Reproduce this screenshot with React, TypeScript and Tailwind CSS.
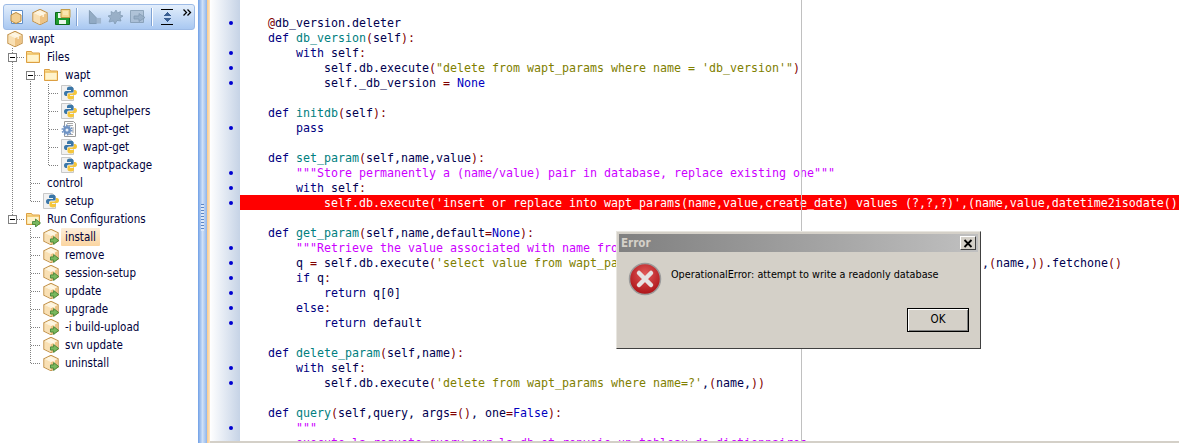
import React from "react";

const CODE: string[] = [
  "    @db_version.deleter",
  "    def db_version(self):",
  "        with self:",
  "            self.db.execute(\"delete from wapt_params where name = 'db_version'\")",
  "            self._db_version = None",
  "",
  "    def initdb(self):",
  "        pass",
  "",
  "    def set_param(self,name,value):",
  '        """Store permanently a (name/value) pair in database, replace existing one"""',
  "        with self:",
  "            self.db.execute('insert or replace into wapt_params(name,value,create_date) values (?,?,?)',(name,value,datetime2isodate()))",
  "",
  "    def get_param(self,name,default=None):",
  '        """Retrieve the value associated with name from database"""',
  "        q = self.db.execute('select value from wapt_params where name=? order by create_date desc limit 1',(name,)).fetchone()",
  "        if q:",
  "            return q[0]",
  "        else:",
  "            return default",
  "",
  "    def delete_param(self,name):",
  "        with self:",
  "            self.db.execute('delete from wapt_params where name=?',(name,))",
  "",
  "    def query(self,query, args=(), one=False):",
  '        """',
  '        execute la requete query sur la db et renvoie un tableau de dictionnaires',
];

const DOTS = [0, 2, 3, 4, 7, 10, 11, 12, 15, 16, 17, 18, 19, 20, 23, 24, 27, 28];

function tokens(line: string, index: number) {
  if (index === 28) return [<span key="d" className="text-[#cc00ff]">{line}</span>];
  if (index === 12) return [<span key="w">{line}</span>];
  const re = /("""[^"]*(?:""")?|"[^"]*"|'[^']*'|\b(?:def|with|if|else|return|pass)\b|\b(?:None|False)\b|[()=:@]|[^"'()=:@]+?(?=\b|["'()=:@]|$))/g;
  const out: React.ReactNode[] = [];
  let afterDef = false;
  let i = 0;
  for (const m of line.matchAll(re)) {
    const t = m[0];
    let c = "text-[#000050]";
    if (t.startsWith('"""')) c = "text-[#cc00ff]";
    else if (t[0] === '"' || t[0] === "'") c = "text-[#808000]";
    else if (/^(def|with|if|else|return|pass)$/.test(t)) c = "text-[#000080]";
    else if (/^(None|False)$/.test(t)) c = "text-[#0000c0]";
    else if (/^[()=:@]$/.test(t)) c = "text-[#800000]";
    else if (afterDef && /\w/.test(t)) {
      c = "text-[#008080]";
      afterDef = false;
    }
    if (t === "def") afterDef = true;
    out.push(<span key={i++} className={c}>{t}</span>);
  }
  return out;
}

function Package({ arrow = false }: { arrow?: boolean }) {
  return (
    <svg width="16" height="16" viewBox="0.6 0.4 14.8 15.2" className="shrink-0">
      <path d="M8 .7 14.8 4v8L8 15.3 1.200 12V4Z" fill="#f8e2b8" stroke="#c2924a" />
      <path d="M8 1.500 14 4.200 8 7.200 2 4.200Z" fill="#fdf3dc" />
      <path d="M8 7.200V14.800L2 11.800V4.600Z" fill="#f9e0b4" />
      <path d="M8 7.200V14.800l6-3V4.600Z" fill="#eec383" />
      <path d="M5 2.800 11 5.800V8" fill="none" stroke="#fff8e8" strokeWidth="1.200" />
      {arrow && (
        <path d="M7.500 9.800h3V7.500l4.800 3.800-4.800 3.800v-2.300h-3Z" fill="#79b85e" stroke="#3d7f32" strokeWidth=".8" />
      )}
    </svg>
  );
}

function Folder({ arrow = false }: { arrow?: boolean }) {
  return (
    <svg width="16" height="16" viewBox="0 0 16 16" className="shrink-0">
      <path d="M1.500 2.500h5l1 1.500h7v9.500h-13Z" fill="#fbdc8c" stroke="#dc9f42" />
      <path d="M2.500 6h11v6.500h-11Z" fill="#fff3cc" />
      <path d="M2 5h12" stroke="#eab95e" />
      {arrow && (
        <path d="M7.500 10.500h3V8l5 4-5 4v-2.500h-3Z" fill="#79b85e" stroke="#3d7f32" strokeWidth=".8" />
      )}
    </svg>
  );
}

function PyDoc() {
  return (
    <svg width="16" height="18" viewBox="0 0 16 18" className="shrink-0">
      <path d="M.5 1.500h9l3 3v12H.5Z" fill="#f1f1f1" stroke="#c8c8c8" />
      <path d="M9 2.500C7 2.500 6 3.300 6 4.500V6h4v1H5C3.800 7 3 8 3 9.500S3.800 12 5 12h1v-1.500C6 9.300 7 8.500 8 8.500h3c1 0 1.500-.7 1.500-1.500V4.500C12.500 3.300 11 2.500 9 2.500Z" fill="#3a76a8" />
      <path d="M10 15.500c2 0 3-.8 3-2V12H9v-1h5c1.200 0 2-1 2-2.500S15.200 6 14 6h-1v1.500c0 1.200-1 2-2 2H8c-1 0-1.500.7-1.500 1.500v2.500c0 1.200 1.500 2 3.500 2Z" fill="#f5c63c" />
    </svg>
  );
}

function GearDoc() {
  return (
    <svg width="16" height="18" viewBox="0 0 16 18" className="shrink-0">
      <path d="M3.500 1.500h9l2 2v13h-11Z" fill="#fdfdfd" stroke="#9a9a9a" />
      <path d="M6 3.500h6M6 5.500h6M10 8h3M11 10h2M11 12h2M6 14.500h6" stroke="#a9a9a9" />
      <circle cx="6" cy="10" r="4" fill="#6f93c4" />
      <circle cx="6" cy="10" r="4.800" fill="none" stroke="#6f93c4" strokeWidth="1.400" strokeDasharray="1.500 1.500" />
      <circle cx="6" cy="10" r="1.500" fill="#e9eff8" />
    </svg>
  );
}

type Guide = { v?: [number, number, number]; h?: [number, number, number]; box?: [number, number] };

function Guides({ width, items }: { width: number; items: Guide[] }) {
  return (
    <svg width={width} height="18" className="shrink-0" shapeRendering="crispEdges">
      {items.map((g, i) => (
        <g key={i} stroke="#808080" strokeDasharray="1 1" fill="none">
          {g.v && <line x1={g.v[0] + 0.5} x2={g.v[0] + 0.5} y1={g.v[1]} y2={g.v[2]} />}
          {g.h && <line y1={g.h[0] + 0.5} y2={g.h[0] + 0.5} x1={g.h[1]} x2={g.h[2]} />}
        </g>
      ))}
      {items.map((g, i) =>
        g.box ? (
          <g key={`b${i}`} shapeRendering="crispEdges">
            <rect x={g.box[0] + 0.5} y={g.box[1] + 0.5} width="8" height="8" fill="#fff" stroke="#808080" />
            <line x1={g.box[0] + 2} x2={g.box[0] + 7} y1={g.box[1] + 4.5} y2={g.box[1] + 4.5} stroke="#000" />
          </g>
        ) : null,
      )}
    </svg>
  );
}

type Row = {
  label: string;
  icon?: React.ReactNode;
  width: number;
  guides: Guide[];
  gap: string;
  selected?: boolean;
};

const outer: Guide = { v: [12, 0, 18] };
const mid: Guide = { v: [30, 0, 18] };
const inner: Guide = { v: [48, 0, 18] };

const runRow = (label: string, last = false, selected = false): Row => ({
  label,
  icon: <Package arrow />,
  width: 43,
  gap: "ml-[6px]",
  selected,
  guides: [{ v: [30, 0, last ? 9 : 18] }, { h: [9, 31, 41] }],
});

const ROWS: Row[] = [
  { label: "wapt", icon: <Package />, width: 7, gap: "ml-[6px]", guides: [] },
  { label: "Files", icon: <Folder />, width: 25, gap: "ml-[6px]", guides: [{ v: [12, 0, 18] }, { h: [9, 17, 24] }, { box: [8, 5] }] },
  { label: "wapt", icon: <Folder />, width: 43, gap: "ml-[6px]", guides: [outer, { v: [30, 9, 18] }, { h: [9, 35, 42] }, { box: [26, 5] }] },
  { label: "common", icon: <PyDoc />, width: 61, gap: "ml-[6px]", guides: [outer, mid, inner, { h: [9, 49, 59] }] },
  { label: "setuphelpers", icon: <PyDoc />, width: 61, gap: "ml-[6px]", guides: [outer, mid, inner, { h: [9, 49, 59] }] },
  { label: "wapt-get", icon: <GearDoc />, width: 61, gap: "ml-[6px]", guides: [outer, mid, inner, { h: [9, 49, 59] }] },
  { label: "wapt-get", icon: <PyDoc />, width: 61, gap: "ml-[6px]", guides: [outer, mid, inner, { h: [9, 49, 59] }] },
  { label: "waptpackage", icon: <PyDoc />, width: 61, gap: "ml-[6px]", guides: [outer, mid, { v: [48, 0, 9] }, { h: [9, 49, 59] }] },
  { label: "control", width: 47, gap: "", guides: [outer, mid, { h: [9, 31, 41] }] },
  { label: "setup", icon: <PyDoc />, width: 43, gap: "ml-[6px]", guides: [outer, { v: [30, 0, 9] }, { h: [9, 31, 41] }] },
  { label: "Run Configurations", icon: <Folder arrow />, width: 25, gap: "ml-[6px]", guides: [{ v: [12, 0, 5] }, { h: [9, 17, 24] }, { box: [8, 5] }, { v: [30, 14, 18] }] },
  runRow("install", false, true),
  runRow("remove"),
  runRow("session-setup"),
  runRow("update"),
  runRow("upgrade"),
  runRow("-i build-upload"),
  runRow("svn update"),
  runRow("uninstall", true),
];

function ToolIcons() {
  return (
    <div className="flex h-full items-center">
      <svg width="16" height="16" viewBox="0 0 16 16" className="ml-[5px] shrink-0">
        <path d="M2.500 1.500h11v13h-11Z" fill="#fff" stroke="#5f8fc9" />
        <path d="M7 3.500 12 6v6l-5 2.500L2 12V6Z" fill="#f3cf92" stroke="#b98a3e" />
      </svg>
      <div className="ml-[7px]">
        <Package />
      </div>
      <svg width="16" height="16" viewBox="0 0 16 16" className="ml-[7px] shrink-0">
        <path d="M.5 3.500h14v12H.5Z" fill="#1f9a2e" stroke="#0c6a1a" />
        <path d="M3 4h8v5H3ZM4 11h7v4H4Z" fill="#eaf6ea" />
        <path d="M6 .5h9v8H6Z" fill="#f4d88e" stroke="#c29b46" />
        <path d="M8 3h5M8 5h5" stroke="#fff3cf" />
      </svg>
      <div className="ml-[5px] h-[18px] w-[2px] border-r border-white bg-[#7fa2d4]" />
      <svg width="14" height="16" viewBox="0 0 15 16" className="ml-[10px] shrink-0" opacity=".8">
        <path d="M1.500 1 9 9v6H1.500Z" fill="#87a0b8" stroke="#6e889f" />
        <path d="M9 9h5v6H9Z" fill="#9bb0c6" />
      </svg>
      <svg width="16" height="16" viewBox="0 0 16 16" className="ml-[6px] shrink-0" opacity=".8">
        <path d="M8 1l1.500 3 3-1.500-.5 3.500 3 1-3 2 1 3-4-.500L7 15 5.500 12 1 13l1.500-4L0 7l3.500-1L3 2.500 6 4Z" fill="#8ea5bc" stroke="#6e889f" strokeWidth=".7" />
      </svg>
      <svg width="16" height="16" viewBox="0 0 16 16" className="ml-[6px] shrink-0" opacity=".8">
        <path d="M.5 1.500h13v12H.5Z" fill="#a7bbd0" stroke="#7f97ad" />
        <path d="M4 7h5V4.500L15 8.500l-6 4V10H4Z" fill="#8ea5bc" stroke="#6e889f" strokeWidth=".7" />
      </svg>
      <div className="ml-[5px] h-[18px] w-[2px] border-r border-white bg-[#7fa2d4]" />
      <svg width="14" height="16" viewBox="0 0 14 16" className="ml-[7px] shrink-0" shapeRendering="crispEdges">
        <path d="M1 .5h12M1 15.500h12" stroke="#000" />
        <path d="M7 3 11 7H3ZM7 13 3 9h8Z" fill="#3a5f93" />
      </svg>
      <svg width="9" height="7" viewBox="0 0 9 7" className="ml-[9px] mt-[-10px] shrink-0">
        <path d="M.5 .5 3.500 3.500.5 6.500M4.500 .5 7.500 3.500 4.500 6.500" fill="none" stroke="#000" strokeWidth="1.300" />
      </svg>
    </div>
  );
}

function ErrorIcon() {
  return (
    <svg width="34" height="34" viewBox="0 0 34 34" className="shrink-0">
      <defs>
        <radialGradient id="er" cx="50%" cy="35%" r="70%">
          <stop offset="0" stopColor="#e25a5a" />
          <stop offset="1" stopColor="#a80d12" />
        </radialGradient>
      </defs>
      <circle cx="17" cy="17" r="15.500" fill="url(#er)" stroke="#9b9b9b" strokeWidth="1.500" />
      <path d="M11 11 23 23M23 11 11 23" stroke="#e6e2e2" strokeWidth="4.500" strokeLinecap="round" />
    </svg>
  );
}

export default function App() {
  return (
    <div className="relative flex h-[443px] w-[1179px] overflow-hidden bg-white">
      <div className="w-[198px] shrink-0 pl-[3px] pr-[3px] pt-[4px] font-['DejaVu_Sans_Condensed','DejaVu_Sans',sans-serif] text-[11.5px] text-[#00003a]">
        <div className="h-[26px] rounded-[3px] border border-[#9dbbe6] bg-gradient-to-b from-[#e3eefb] to-[#a9c8f1]">
          <ToolIcons />
        </div>
        <div className="-ml-[3px]">
          {ROWS.map((r, i) => (
            <div key={i} className="flex h-[18px] items-center whitespace-nowrap">
              <Guides width={r.width} items={r.guides} />
              {r.icon}
              <span
                className={
                  r.selected
                    ? "ml-[2px] flex h-[18px] w-[39px] items-center rounded-[1px] bg-gradient-to-b from-[#fdeeda] to-[#fbd5a0] px-[4px] pt-[2px]"
                    : r.icon
                      ? `${r.gap} pt-[2px]`
                      : "pt-[2px]"
                }
              >
                {r.label}
              </span>
            </div>
          ))}
        </div>
      </div>

      <div className="flex w-[12px] shrink-0">
        <div className="relative flex w-[9px] items-center justify-center bg-gradient-to-r from-[#6f9fe6] via-[#cfe0f7] to-[#8fb4ea]">
          <div className="mt-[-8px] h-[27px] w-[3px] bg-[repeating-linear-gradient(to_bottom,#5d86c5_0,#5d86c5_1px,#dce8f8_1px,#dce8f8_3px)]" />
        </div>
        <div className="w-[3px] bg-gradient-to-r from-[#f9c98b] to-[#fde7c8]" />
      </div>

      <div className="flex min-w-0 flex-1 flex-col">
        <div className="flex min-h-0 flex-1">
          <div className="w-[30px] shrink-0 bg-gradient-to-r from-white to-[#c6d3e6] pt-[15px]">
            {CODE.map((_, i) => (
              <div key={i} className="flex h-[15px] items-center justify-end pr-[7px]">
                {DOTS.includes(i) && <div className="h-[4px] w-[4px] rounded-full bg-[#0000d0]" />}
              </div>
            ))}
          </div>
          <div className="min-w-0 flex-1 overflow-hidden pt-[15px] font-['DejaVu_Sans_Mono',monospace] text-[11.63px] leading-[17px]">
            {CODE.map((line, i) => (
              <div
                key={i}
                className={
                  i === 12
                    ? "h-[15px] whitespace-pre bg-[#ff0000] text-white"
                    : "h-[15px] whitespace-pre"
                }
              >
                {tokens(line, i)}
              </div>
            ))}
          </div>
        </div>
        <div className="h-[2px] shrink-0 bg-[#d4d0c8]" />
      </div>

      <div className="absolute bottom-[2px] left-[801px] top-0 w-[1px] bg-[#c0c0c0]" />

      <div className="absolute left-[616px] top-[231px] h-[118px] w-[365px] border-b border-l border-r border-t border-b-[#404040] border-l-[#e8e6e0] border-r-[#404040] border-t-[#e8e6e0] bg-[#d4d0c8] p-[2px] font-['DejaVu_Sans_Condensed','DejaVu_Sans',sans-serif] text-[10.75px] text-black">
        <div className="flex h-[18px] items-center justify-between bg-gradient-to-r from-[#808080] to-[#c0c0c0] pl-[2px] pr-[2px]">
          <span className="pt-[2px] text-[11.5px] font-bold text-[#d4d0c8]">Error</span>
          <div className="flex h-[14px] w-[16px] items-center justify-center border border-b-[#404040] border-l-white border-r-[#404040] border-t-white bg-[#d4d0c8]">
            <svg width="10" height="9" viewBox="0 0 10 9">
              <path d="M1.500 1 8.500 8M8.500 1 1.500 8" stroke="#000" strokeWidth="1.800" />
            </svg>
          </div>
        </div>
        <div className="flex items-start pl-[9px] pt-[10px]">
          <ErrorIcon />
          <div className="ml-[9px] mt-[4px] whitespace-nowrap leading-[18px]">OperationalError: attempt to write a readonly database</div>
        </div>
        <div className="flex justify-end pr-[9px] pt-[12px]">
          <div className="flex h-[24px] w-[62px] items-center justify-center border border-black bg-[#d4d0c8] text-[11.5px] shadow-[inset_1px_1px_0_#fff,inset_-1px_-1px_0_#808080]">
            OK
          </div>
        </div>
      </div>
    </div>
  );
}
